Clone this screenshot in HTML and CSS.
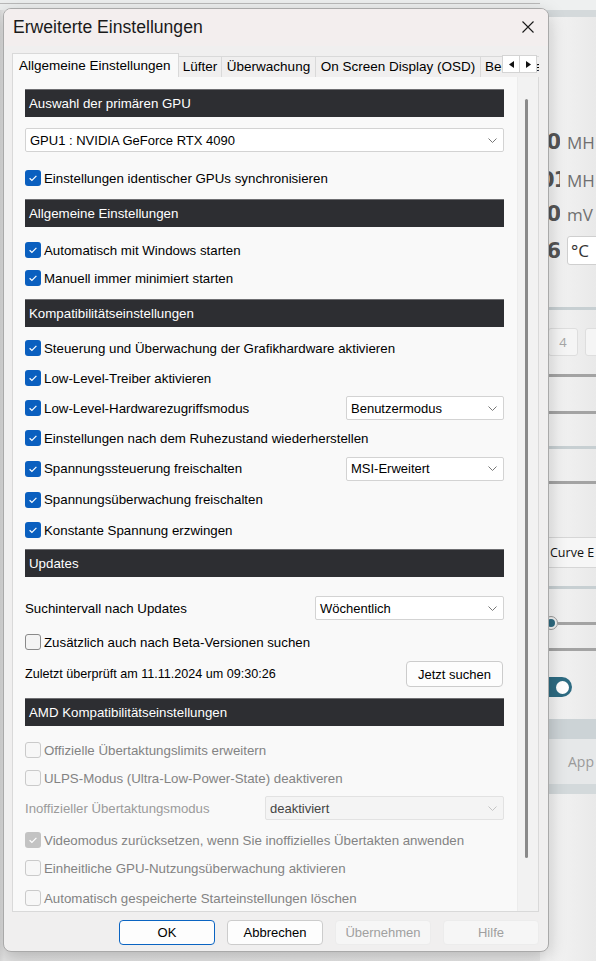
FILE: index.html
```html
<!DOCTYPE html>
<html lang="de">
<head>
<meta charset="utf-8">
<title>Erweiterte Einstellungen</title>
<link rel="stylesheet" href="styles.css">
</head>
<body>
<div class="desktop">
  <div class="topband"></div>
  <div class="bgapp">
    <div class="bg-top"></div>
    <div class="bg-top2"></div>
    <div class="bg-val v1"><span class="dig">0</span><span class="unit">MH</span></div>
    <div class="bg-val v2"><span class="dig">01</span><span class="unit">MH</span></div>
    <div class="bg-val v3"><span class="dig">0</span><span class="unit">mV</span></div>
    <div class="bg-val v4"><span class="dig">6</span><span class="unitbox">°C</span></div>
    <div class="bg-line light l1"></div>
    <div class="bg-btns"><span class="bg-btn">4</span><span class="bg-btn"></span></div>
    <div class="bg-line dark l2"></div>
    <div class="bg-line dark l3"></div>
    <div class="bg-line light l4"></div>
    <div class="bg-line dark l5"></div>
    <div class="bg-curve">Curve E</div>
    <div class="bg-line light l6"></div>
    <div class="bg-slider"><span class="knob"><span class="knobdot"></span></span><span class="track"></span></div>
    <div class="bg-line dark l7"></div>
    <div class="bg-toggle"><span class="pill"><span class="pillknob"></span></span></div>
    <div class="bg-band b1"></div>
    <div class="bg-band b2">App</div>
    <div class="bg-band b3"></div>
  </div>

  <div class="dialog">
    <div class="titlebar">
      <span class="title">Erweiterte Einstellungen</span>
      <svg class="close" width="12" height="12" viewBox="0 0 12 12"><path d="M0.5 0.5L11.5 11.5M11.5 0.5L0.5 11.5" stroke="#1a1a1a" stroke-width="1.1" fill="none"/></svg>
    </div>

    <div class="tabs">
      <div class="tab active">Allgemeine Einstellungen</div>
      <div class="tab t-luefter">Lüfter</div>
      <div class="tab t-ueber">Überwachung</div>
      <div class="tab t-osd">On Screen Display (OSD)</div>
      <div class="tab t-bench">Benchmark</div>
      <div class="spin">
        <span class="spinbtn"><svg width="5" height="7" viewBox="0 0 5 7"><path d="M5 0L0 3.5L5 7Z" fill="#111"/></svg></span>
        <span class="spinbtn"><svg width="5" height="7" viewBox="0 0 5 7"><path d="M0 0L5 3.5L0 7Z" fill="#111"/></svg></span>
      </div>
    </div>

    <div class="panel">
      <div class="content">
        <div class="hdr mt12">Auswahl der primären GPU</div>
        <div class="select full mt11"><span class="seltext">GPU1 : NVIDIA GeForce RTX 4090</span><svg class="chev" width="9" height="5" viewBox="0 0 9 5"><path d="M0.5 0.5L4.5 4.5L8.5 0.5" stroke="#777" fill="none"/></svg></div>
        <div class="row h24 mt14"><span class="cb on"><svg viewBox="0 0 16 16"><path d="M4.6 8.3L6.9 10.5L11.4 5.9" fill="none" stroke="#fff" stroke-width="1.2"/></svg></span><span class="lbl">Einstellungen identischer GPUs synchronisieren</span></div>

        <div class="hdr mt9">Allgemeine Einstellungen</div>
        <div class="row h24 mt11"><span class="cb on"><svg viewBox="0 0 16 16"><path d="M4.6 8.3L6.9 10.5L11.4 5.9" fill="none" stroke="#fff" stroke-width="1.2"/></svg></span><span class="lbl">Automatisch mit Windows starten</span></div>
        <div class="row h24 mt4"><span class="cb on"><svg viewBox="0 0 16 16"><path d="M4.6 8.3L6.9 10.5L11.4 5.9" fill="none" stroke="#fff" stroke-width="1.2"/></svg></span><span class="lbl">Manuell immer minimiert starten</span></div>

        <div class="hdr mt9">Kompatibilitätseinstellungen</div>
        <div class="row h30 mt6"><span class="cb on"><svg viewBox="0 0 16 16"><path d="M4.6 8.3L6.9 10.5L11.4 5.9" fill="none" stroke="#fff" stroke-width="1.2"/></svg></span><span class="lbl">Steuerung und Überwachung der Grafikhardware aktivieren</span></div>
        <div class="row h30"><span class="cb on"><svg viewBox="0 0 16 16"><path d="M4.6 8.3L6.9 10.5L11.4 5.9" fill="none" stroke="#fff" stroke-width="1.2"/></svg></span><span class="lbl">Low-Level-Treiber aktivieren</span></div>
        <div class="row h30"><span class="cb on"><svg viewBox="0 0 16 16"><path d="M4.6 8.3L6.9 10.5L11.4 5.9" fill="none" stroke="#fff" stroke-width="1.2"/></svg></span><span class="lbl">Low-Level-Hardwarezugriffsmodus</span>
          <div class="select w158 push"><span class="seltext">Benutzermodus</span><svg class="chev" width="9" height="5" viewBox="0 0 9 5"><path d="M0.5 0.5L4.5 4.5L8.5 0.5" stroke="#777" fill="none"/></svg></div></div>
        <div class="row h30"><span class="cb on"><svg viewBox="0 0 16 16"><path d="M4.6 8.3L6.9 10.5L11.4 5.9" fill="none" stroke="#fff" stroke-width="1.2"/></svg></span><span class="lbl">Einstellungen nach dem Ruhezustand wiederherstellen</span></div>
        <div class="row h31"><span class="cb on"><svg viewBox="0 0 16 16"><path d="M4.6 8.3L6.9 10.5L11.4 5.9" fill="none" stroke="#fff" stroke-width="1.2"/></svg></span><span class="lbl">Spannungssteuerung freischalten</span>
          <div class="select w158 push"><span class="seltext">MSI-Erweitert</span><svg class="chev" width="9" height="5" viewBox="0 0 9 5"><path d="M0.5 0.5L4.5 4.5L8.5 0.5" stroke="#777" fill="none"/></svg></div></div>
        <div class="row h31"><span class="cb on"><svg viewBox="0 0 16 16"><path d="M4.6 8.3L6.9 10.5L11.4 5.9" fill="none" stroke="#fff" stroke-width="1.2"/></svg></span><span class="lbl">Spannungsüberwachung freischalten</span></div>
        <div class="row h30"><span class="cb on"><svg viewBox="0 0 16 16"><path d="M4.6 8.3L6.9 10.5L11.4 5.9" fill="none" stroke="#fff" stroke-width="1.2"/></svg></span><span class="lbl">Konstante Spannung erzwingen</span></div>

        <div class="hdr mt4">Updates</div>
        <div class="row h24 mt19"><span class="plain">Suchintervall nach Updates</span>
          <div class="select w189 push"><span class="seltext">Wöchentlich</span><svg class="chev" width="9" height="5" viewBox="0 0 9 5"><path d="M0.5 0.5L4.5 4.5L8.5 0.5" stroke="#777" fill="none"/></svg></div></div>
        <div class="row h24 mt10"><span class="cb off"></span><span class="lbl">Zusätzlich auch nach Beta-Versionen suchen</span></div>
        <div class="row h26 mt7"><span class="plain narrow">Zuletzt überprüft am 11.11.2024 um 09:30:26</span><button class="btn jetzt">Jetzt suchen</button></div>

        <div class="hdr mt11">AMD Kompatibilitätseinstellungen</div>
        <div class="row h28 mt10"><span class="cb dis"></span><span class="lbl grey">Offizielle Übertaktungslimits erweitern</span></div>
        <div class="row h28"><span class="cb dis"></span><span class="lbl grey">ULPS-Modus (Ultra-Low-Power-State) deaktiveren</span></div>
        <div class="row h24 mt4"><span class="plain lightgrey">Inoffizieller Übertaktungsmodus</span>
          <div class="select w239 push disabled"><span class="seltext">deaktiviert</span><svg class="chev" width="9" height="5" viewBox="0 0 9 5"><path d="M0.5 0.5L4.5 4.5L8.5 0.5" stroke="#c4c4c4" fill="none"/></svg></div></div>
        <div class="row h28 mt6"><span class="cb dison"><svg viewBox="0 0 16 16"><path d="M4.6 8.3L6.9 10.5L11.4 5.9" fill="none" stroke="#fff" stroke-width="1.2"/></svg></span><span class="lbl grey">Videomodus zurücksetzen, wenn Sie inoffizielles Übertakten anwenden</span></div>
        <div class="row h28"><span class="cb dis"></span><span class="lbl grey">Einheitliche GPU-Nutzungsüberwachung aktivieren</span></div>
        <div class="row h28 mt2"><span class="cb dis"></span><span class="lbl grey">Automatisch gespeicherte Starteinstellungen löschen</span></div>
      </div>
      <div class="scrolltrack"><div class="thumb"></div></div>
    </div>

    <div class="footer">
      <button class="btn fbtn ok">OK</button>
      <button class="btn fbtn">Abbrechen</button>
      <button class="btn fbtn off">Übernehmen</button>
      <button class="btn fbtn off">Hilfe</button>
    </div>
  </div>
</div>
</body>
</html>
```

FILE: styles.css
```css
html, body {
  margin: 0;
  padding: 0;
}
body {
  width: 596px;
  height: 961px;
  overflow: hidden;
  background: #e4e4e4;
  font-family: "Liberation Sans", Arial, sans-serif;
  color: #000;
}
.desktop {
  position: relative;
  width: 596px;
  height: 961px;
  background: linear-gradient(90deg, #d9d9d9 0, #e6e6e6 4px, #ececec 100%);
}
.topband {
  height: 10px;
  background: linear-gradient(180deg, #eceeee 0, #eceeee 3px, #b9b9b9 3px, #b9b9b9 4px, #eceeee 4px);
}

/* background application (window under the dialog) */
.bgapp {
  position: absolute;
  left: 540px;
  top: 0;
  width: 56px;
  height: 961px;
  background: linear-gradient(90deg, #f7f7f7 0, #f7f7f7 8px, #f3f3f3 12px, #e9e9e9 100%);
  display: flex;
  flex-direction: column;
  overflow: hidden;
}
.bg-top { height: 10px; background: #eef0f0; flex: none; }
.bg-top2 { height: 7px; background: #d4d9db; flex: none; }
.bg-val {
  display: flex;
  align-items: center;
  height: 28px;
  flex: none;
}
.v1 { margin-top: 111px; }
.v2 { margin-top: 10px; }
.v3 { margin-top: 6px; }
.v4 { margin-top: 8px; height: 29px; }
.dig {
  font-family: "DejaVu Sans", sans-serif;
  font-weight: bold;
  font-size: 21px;
  color: #555555;
  width: 20px;
  text-align: right;
  letter-spacing: -1px;
  flex: none;
  overflow: hidden;
}
.unit {
  margin-left: 7px;
  font-family: "Open Sans", sans-serif;
  font-size: 17px;
  color: #707070;
  white-space: nowrap;
}
.unitbox {
  margin-left: 7px;
  width: 40px;
  height: 29px;
  box-sizing: border-box;
  border: 1px solid #cfcfcf;
  border-radius: 3px;
  background: #fff;
  font-family: "Open Sans", sans-serif;
  font-size: 17px;
  color: #333;
  padding-left: 3px;
  line-height: 27px;
  flex: none;
}
.bg-line { height: 3px; flex: none; }
.bg-line.light { background: #c7cfd2; }
.bg-line.dark { background: #a3a3a3; }
.l1 { margin-top: 42px; }
.bg-btns {
  margin-top: 18px;
  height: 28px;
  display: flex;
  gap: 7px;
  padding-left: 8px;
  flex: none;
}
.bg-btn {
  width: 30px;
  height: 28px;
  box-sizing: border-box;
  border: 1px solid #dedede;
  border-radius: 3px;
  background: #f5f5f5;
  color: #a6a6a6;
  font-family: "Open Sans", sans-serif;
  font-size: 13px;
  text-align: center;
  line-height: 26px;
  flex: none;
}
.l2 { margin-top: 18px; }
.l3 { margin-top: 34px; }
.l4 { margin-top: 32px; }
.l5 { margin-top: 32px; }
.bg-curve {
  margin-top: 53px;
  height: 31px;
  box-sizing: border-box;
  border-top: 1px solid #d6d6d6;
  border-bottom: 1px solid #d6d6d6;
  background: #f6f6f6;
  padding-left: 10px;
  font-family: "Open Sans", sans-serif;
  font-size: 12.5px;
  line-height: 29px;
  color: #111;
  white-space: nowrap;
  flex: none;
}
.l6 { margin-top: 18px; }
.bg-slider {
  margin-top: 26px;
  height: 16px;
  display: flex;
  align-items: center;
  padding-left: 4px;
  flex: none;
}
.knob {
  width: 14px;
  height: 14px;
  box-sizing: border-box;
  border: 1px solid #9a9a9a;
  border-radius: 50%;
  background: #f4f4f4;
  display: flex;
  align-items: center;
  justify-content: center;
  flex: none;
}
.knobdot {
  width: 8px;
  height: 8px;
  border-radius: 50%;
  background: #2e6a80;
}
.track { flex: 1; height: 3px; background: #a3a3a3; }
.l7 { margin-top: 17px; }
.bg-toggle {
  margin-top: 26px;
  height: 20px;
  flex: none;
}
.pill {
  display: flex;
  align-items: center;
  justify-content: flex-end;
  width: 32px;
  height: 20px;
  border-radius: 0 10px 10px 0;
  background: #2d6b82;
  padding-right: 3px;
  box-sizing: border-box;
}
.pillknob {
  width: 13px;
  height: 13px;
  border-radius: 50%;
  background: #fff;
}
.bg-band { flex: none; }
.b1 { margin-top: 22px; height: 20px; background: #ccd3d6; }
.b2 {
  height: 45px;
  background: #e6e8e9;
  color: #9a9a9a;
  font-family: "Open Sans", sans-serif;
  font-size: 14px;
  line-height: 45px;
  padding-left: 28px;
}
.b3 { height: 10px; background: #d3d9db; }

/* dialog */
.dialog {
  position: absolute;
  left: 3px;
  top: 8px;
  width: 546px;
  height: 944px;
  box-sizing: border-box;
  border: 1px solid #a9a9a9;
  border-radius: 8px;
  background: #f0efef;
  box-shadow: 0 6px 18px rgba(0, 0, 0, 0.22);
  display: flex;
  flex-direction: column;
  overflow: hidden;
}
.titlebar {
  height: 37px;
  flex: none;
  background: #f3eeee;
  display: flex;
  align-items: center;
  padding-left: 9px;
  padding-right: 14px;
}
.title {
  font-size: 17.6px;
  color: #1a1a1a;
  flex: 1;
  padding-bottom: 1px;
}
.close { flex: none; margin-top: -2px; }

.tabs {
  position: relative;
  margin: 7px 9px 0 8px;
  height: 24px;
  display: flex;
  align-items: flex-end;
  overflow: hidden;
  flex: none;
  font-size: 13.5px;
  z-index: 1;
}
.tab {
  height: 21px;
  box-sizing: border-box;
  border: 1px solid #d9d9d9;
  border-left: none;
  border-bottom: none;
  background: #f0efef;
  line-height: 20px;
  text-align: center;
  white-space: nowrap;
  flex: none;
  overflow: hidden;
}
.tab.active {
  height: 24px;
  width: 167px;
  border-left: 1px solid #d9d9d9;
  background: #f9f9f9;
  text-align: left;
  padding-left: 6px;
  line-height: 23px;
}
.t-luefter { width: 43px; }
.t-ueber { width: 94px; }
.t-osd { width: 165px; }
.t-bench { width: 60px; text-align: left; padding-left: 4px; }
.spin {
  position: absolute;
  left: 490px;
  top: 2px;
  width: 35px;
  height: 18px;
  display: flex;
  box-sizing: border-box;
  border: 1px solid #d4d4d4;
  background: #fff;
}
.spinbtn {
  flex: 1;
  display: flex;
  align-items: center;
  justify-content: center;
}
.spinbtn + .spinbtn { border-left: 1px solid #d4d4d4; }

.panel {
  margin: -1px 9px 0 8px;
  flex: 1;
  box-sizing: border-box;
  border: 1px solid #d9d9d9;
  background: #f9f9f9;
  display: flex;
  justify-content: space-between;
  overflow: hidden;
  min-height: 0;
}
.content {
  width: 479px;
  margin-left: 12px;
  display: flex;
  flex-direction: column;
  flex: none;
}
.scrolltrack {
  width: 21px;
  flex: none;
  background: #f2f2f2;
  border-left: 1px solid #ececec;
  box-sizing: border-box;
  padding-left: 7px;
  padding-top: 22px;
}
.thumb {
  width: 3px;
  height: 759px;
  border-radius: 2px;
  background: #8a8a8a;
}

.hdr {
  height: 28px;
  flex: none;
  box-sizing: border-box;
  background: #2d2e32;
  border-top: 1px solid #6f6f72;
  color: #fff;
  font-size: 13.3px;
  padding-left: 4px;
  display: flex;
  align-items: center;
}
.row {
  display: flex;
  align-items: center;
  flex: none;
}
.h24 { height: 24px; }
.h26 { height: 26px; }
.h28 { height: 28px; }
.h30 { height: 30px; }
.h31 { height: 31px; }
.mt2 { margin-top: 2px; }
.mt4 { margin-top: 4px; }
.mt6 { margin-top: 6px; }
.mt7 { margin-top: 7px; }
.mt9 { margin-top: 9px; }
.mt10 { margin-top: 10px; }
.mt11 { margin-top: 11px; }
.mt12 { margin-top: 12px; }
.mt14 { margin-top: 14px; }
.mt19 { margin-top: 19px; }

.cb {
  width: 16px;
  height: 16px;
  box-sizing: border-box;
  border-radius: 3px;
  flex: none;
  display: flex;
}
.cb svg { width: 16px; height: 16px; }
.cb.on { background: #0a5fbf; }
.cb.off { border: 1px solid #8a8a8a; background: #f4f4f4; }
.cb.dis { border: 1px solid #cacaca; background: #f7f7f7; }
.cb.dison { background: #c3c3c3; }
.cb.on svg, .cb.dison svg { display: block; }

.lbl {
  margin-left: 3px;
  font-size: 13.3px;
  white-space: nowrap;
  color: #000;
}
.lbl.grey { color: #838383; }
.plain {
  font-size: 13.3px;
  white-space: nowrap;
}
.plain.narrow { font-size: 12.6px; }
.plain.lightgrey { font-size: 13.2px; color: #9b9b9b; }

.select {
  height: 24px;
  box-sizing: border-box;
  border: 1px solid #d3d3d3;
  border-radius: 2px;
  background: #fff;
  display: flex;
  align-items: center;
  padding-left: 4px;
  padding-right: 6px;
  flex: none;
  font-size: 13px;
}
.select.full { width: 479px; }
.w158 { width: 158px; }
.w189 { width: 189px; }
.w239 { width: 239px; }
.select.disabled { background: #f4f4f4; border-color: #e2e2e2; color: #444; }
.seltext { flex: 1; white-space: nowrap; }
.chev { flex: none; }

.btn {
  font-family: "Liberation Sans", Arial, sans-serif;
  font-size: 13px;
  color: #000;
  background: #fdfdfd;
  border: 1px solid #cccccc;
  border-radius: 4px;
  padding: 0;
  margin: 0;
  box-sizing: border-box;
}
.jetzt { width: 97px; height: 26px; margin-left: auto; margin-right: 1px; }
.push { margin-left: auto; }

.footer {
  flex: none;
  height: 25px;
  margin: 8px 9px 6px 0;
  display: flex;
  justify-content: flex-end;
  gap: 12px;
}
.fbtn { width: 96px; height: 25px; }
.fbtn.ok { border: 1px solid #0a64c2; }
.fbtn.off { background: #f6f6f6; border-color: #ececec; color: #a0a0a0; }
```
